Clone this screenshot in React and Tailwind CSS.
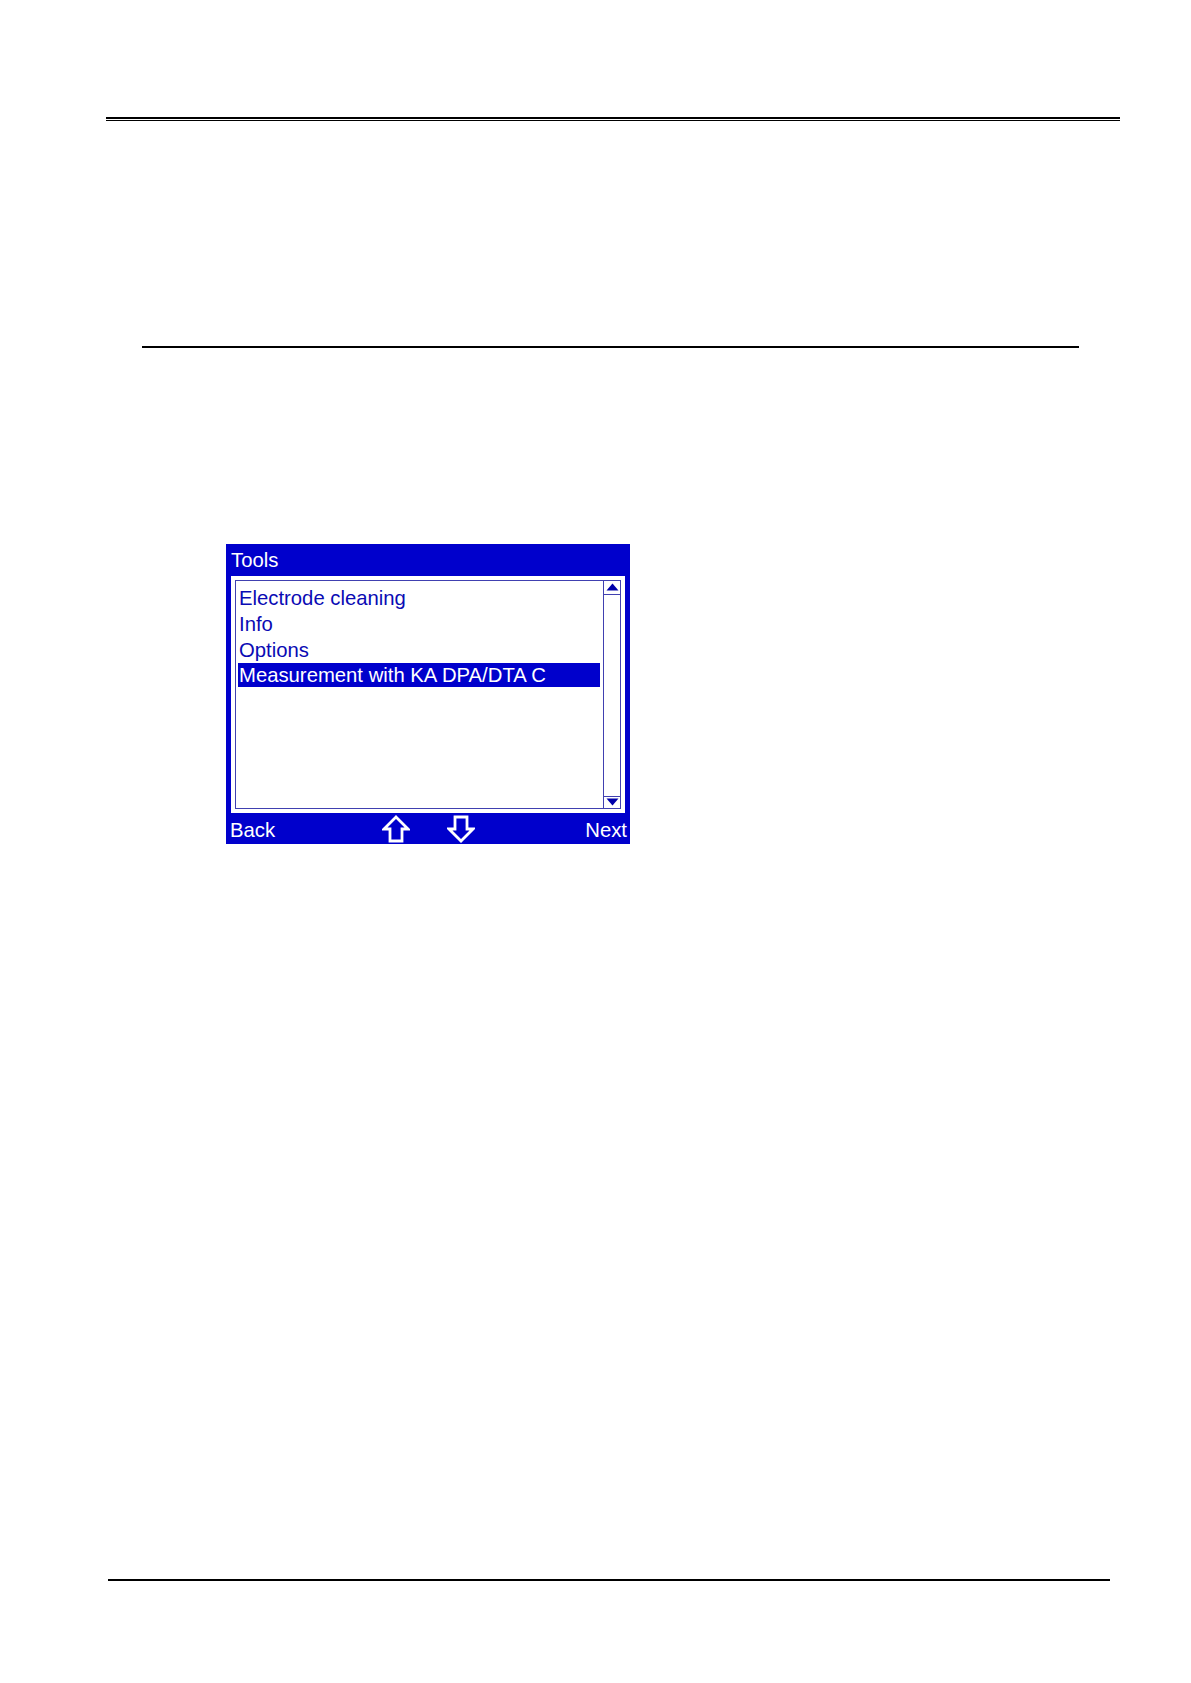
import React from 'react';

const items = ['Electrode cleaning', 'Info', 'Options', 'Measurement with KA DPA/DTA C'];

function ArrowUp() {
  return (
    <svg width="28" height="28" viewBox="0 0 28 28">
      <polygon points="14,2 26,14 20,14 20,26 8,26 8,14 2,14" fill="none" stroke="white" strokeWidth="2.8" strokeLinejoin="miter" />
    </svg>
  );
}

function ArrowDown() {
  return (
    <svg width="28" height="28" viewBox="0 0 28 28">
      <polygon points="8,2 20,2 20,14 26,14 14,26 2,14 8,14" fill="none" stroke="white" strokeWidth="2.8" strokeLinejoin="miter" />
    </svg>
  );
}

function ToolsScreen() {
  return (
    <div className="w-[404px] h-[300px] bg-[#0000cc] flex flex-col text-[20.3px]">
      <div className="h-[32px] leading-[32px] pl-[5px] text-white">Tools</div>
      <div className="mx-[5px] h-[237px] bg-white p-[4px]">
        <div className="h-full border border-[#4040b0] flex">
          <div className="flex-1 pt-[4px] pl-[2px] pr-[3px]">
            {items.map((it, i) =>
              i === 3 ? (
                <div key={it} className="h-[24px] leading-[24px] px-[1px] bg-[#0000cc] text-white whitespace-nowrap">
                  {it}
                </div>
              ) : (
                <div key={it} className="h-[26px] leading-[26px] px-[1px] text-[#0a0ab4] whitespace-nowrap">
                  {it}
                </div>
              )
            )}
          </div>
          <div className="w-[17px] border-l border-[#4040b0] flex flex-col justify-between">
            <div className="h-[14px] border-b border-[#4040b0] flex items-center justify-center">
              <svg width="13" height="8" viewBox="0 0 13 8">
                <polygon points="6.5,0.5 12.5,7.5 0.5,7.5" fill="#0000aa" />
              </svg>
            </div>
            <div className="h-[12px] border-t border-[#4040b0] flex items-center justify-center">
              <svg width="13" height="8" viewBox="0 0 13 8">
                <polygon points="0.5,0.5 12.5,0.5 6.5,7.5" fill="#0000aa" />
              </svg>
            </div>
          </div>
        </div>
      </div>
      <div className="h-[31px] flex items-start text-white">
        <div className="pt-[5px] leading-[24px] pl-[4px] w-[156px]">Back</div>
        <div className="pt-[2px] w-[28px]">
          <ArrowUp />
        </div>
        <div className="pt-[2px] ml-[37px]">
          <ArrowDown />
        </div>
        <div className="flex-1 pt-[5px] leading-[24px] pr-[3px] text-right">Next</div>
      </div>
    </div>
  );
}

export default function App() {
  return (
    <div className="w-[1191px] h-[1683px] bg-white flex flex-col" style={{ fontFamily: '"Liberation Sans", Arial, sans-serif' }}>
      <div className="mt-[117px] ml-[106px] w-[1014px]">
        <div className="h-[2px] bg-black" />
        <div className="h-[1px] mt-[1px] bg-black" />
      </div>
      <div className="mt-[225px] ml-[142px] w-[937px] h-[1.5px] bg-black" />
      <div className="mt-[196px] ml-[226px]">
        <ToolsScreen />
      </div>
      <div className="mt-[735px] ml-[108px] w-[1002px] h-[2px] bg-black" />
    </div>
  );
}
